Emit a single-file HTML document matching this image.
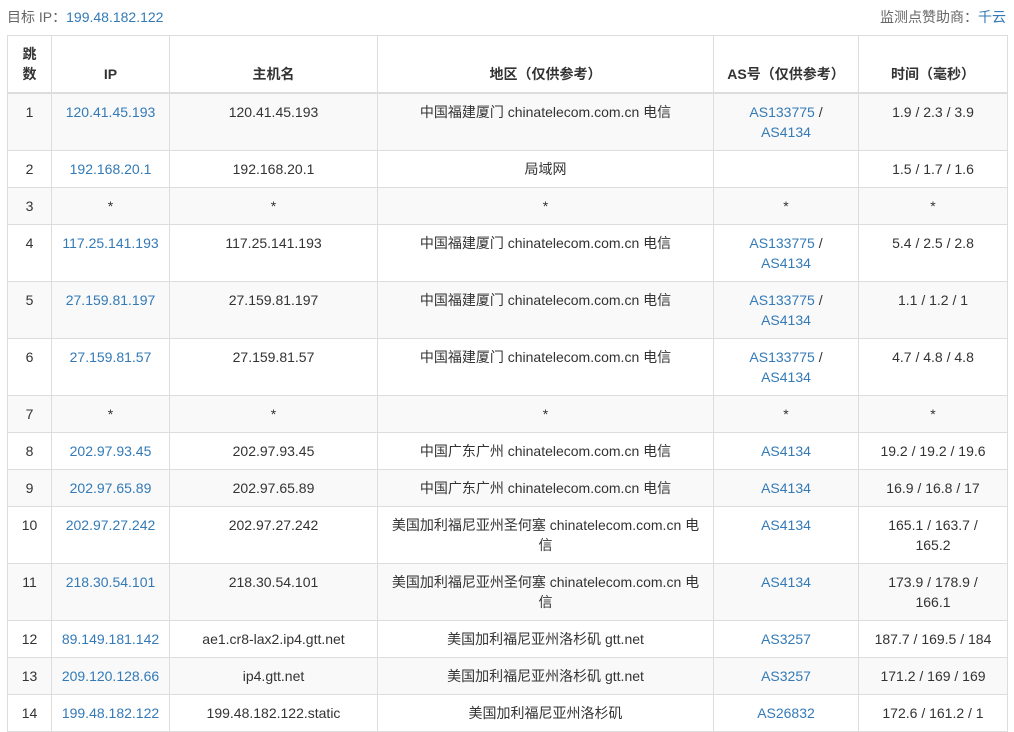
<!DOCTYPE html>
<html><head><meta charset="utf-8"><style>
body{margin:0;background:#fff;font-family:"Liberation Sans","Noto Sans CJK SC",sans-serif;font-size:14px;color:#333;overflow:hidden;height:707px}
.top{position:absolute;left:7px;top:7px;right:8px;height:20px;line-height:20px;color:#666}
.top .r{position:absolute;right:0;top:0}
a{color:#337ab7;text-decoration:none}
table{position:absolute;left:7px;top:35px;width:1000px;border-collapse:collapse;table-layout:fixed}
td,th{border:1px solid #ddd;padding:8px;line-height:20px;text-align:center;vertical-align:top;white-space:nowrap}
td.w{white-space:normal}
th{vertical-align:bottom;border-bottom:2px solid #ddd;font-weight:bold}
tbody tr:nth-child(odd){background:#f9f9f9}
</style></head><body>
<div class="top">目标 IP：<a>199.48.182.122</a><span class="r">监测点赞助商：<a>千云</a></span></div>
<table>
<colgroup><col style="width:44px"><col style="width:118px"><col style="width:208px"><col style="width:336px"><col style="width:145px"><col style="width:149px"></colgroup>
<thead><tr><th>跳<br>数</th><th>IP</th><th>主机名</th><th>地区（仅供参考）</th><th>AS号（仅供参考）</th><th>时间（毫秒）</th></tr></thead>
<tbody>
<tr><td>1</td><td><a>120.41.45.193</a></td><td>120.41.45.193</td><td>中国福建厦门 chinatelecom.com.cn 电信</td><td><a>AS133775</a> /<br><a>AS4134</a></td><td>1.9 / 2.3 / 3.9</td></tr>
<tr><td>2</td><td><a>192.168.20.1</a></td><td>192.168.20.1</td><td>局域网</td><td></td><td>1.5 / 1.7 / 1.6</td></tr>
<tr><td>3</td><td>*</td><td>*</td><td>*</td><td>*</td><td>*</td></tr>
<tr><td>4</td><td><a>117.25.141.193</a></td><td>117.25.141.193</td><td>中国福建厦门 chinatelecom.com.cn 电信</td><td><a>AS133775</a> /<br><a>AS4134</a></td><td>5.4 / 2.5 / 2.8</td></tr>
<tr><td>5</td><td><a>27.159.81.197</a></td><td>27.159.81.197</td><td>中国福建厦门 chinatelecom.com.cn 电信</td><td><a>AS133775</a> /<br><a>AS4134</a></td><td>1.1 / 1.2 / 1</td></tr>
<tr><td>6</td><td><a>27.159.81.57</a></td><td>27.159.81.57</td><td>中国福建厦门 chinatelecom.com.cn 电信</td><td><a>AS133775</a> /<br><a>AS4134</a></td><td>4.7 / 4.8 / 4.8</td></tr>
<tr><td>7</td><td>*</td><td>*</td><td>*</td><td>*</td><td>*</td></tr>
<tr><td>8</td><td><a>202.97.93.45</a></td><td>202.97.93.45</td><td>中国广东广州 chinatelecom.com.cn 电信</td><td><a>AS4134</a></td><td>19.2 / 19.2 / 19.6</td></tr>
<tr><td>9</td><td><a>202.97.65.89</a></td><td>202.97.65.89</td><td>中国广东广州 chinatelecom.com.cn 电信</td><td><a>AS4134</a></td><td>16.9 / 16.8 / 17</td></tr>
<tr><td>10</td><td><a>202.97.27.242</a></td><td>202.97.27.242</td><td>美国加利福尼亚州圣何塞 chinatelecom.com.cn 电<br>信</td><td><a>AS4134</a></td><td>165.1 / 163.7 /<br>165.2</td></tr>
<tr><td>11</td><td><a>218.30.54.101</a></td><td>218.30.54.101</td><td>美国加利福尼亚州圣何塞 chinatelecom.com.cn 电<br>信</td><td><a>AS4134</a></td><td>173.9 / 178.9 /<br>166.1</td></tr>
<tr><td>12</td><td><a>89.149.181.142</a></td><td>ae1.cr8-lax2.ip4.gtt.net</td><td>美国加利福尼亚州洛杉矶 gtt.net</td><td><a>AS3257</a></td><td>187.7 / 169.5 / 184</td></tr>
<tr><td>13</td><td><a>209.120.128.66</a></td><td>ip4.gtt.net</td><td>美国加利福尼亚州洛杉矶 gtt.net</td><td><a>AS3257</a></td><td>171.2 / 169 / 169</td></tr>
<tr><td>14</td><td><a>199.48.182.122</a></td><td>199.48.182.122.static</td><td>美国加利福尼亚州洛杉矶</td><td><a>AS26832</a></td><td>172.6 / 161.2 / 1</td></tr>
</tbody></table>
</body></html>
